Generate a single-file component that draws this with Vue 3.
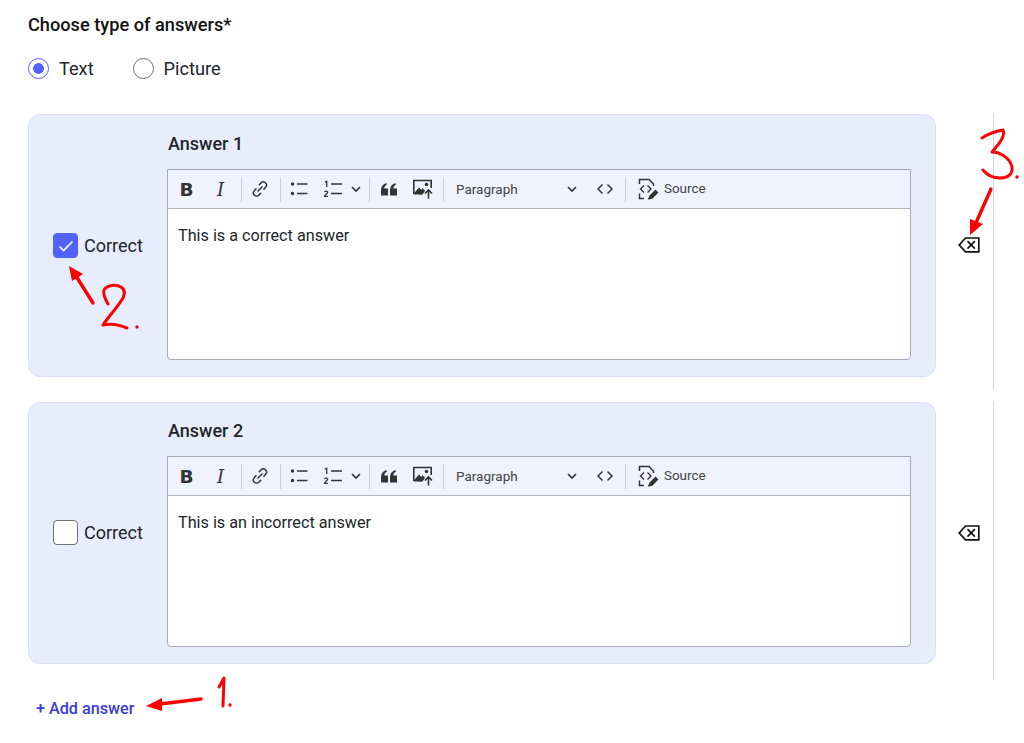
<script setup>
const answers = [
  { id: 1, text: 'This is a correct answer', correct: true },
  { id: 2, text: 'This is an incorrect answer', correct: false },
]
</script>

<template>
  <div class="page">
    <h2 class="title">Choose type of answers*</h2>
    <div class="radios">
      <label class="radio"><span class="dot on"></span>Text</label>
      <label class="radio"><span class="dot"></span>Picture</label>
    </div>

    <div class="list">
      <div v-for="a in answers" :key="a.id" class="row">
        <div class="card">
          <div class="check">
            <span class="box" :class="{ on: a.correct }">
              <svg v-if="a.correct" width="16" height="16" viewBox="0 0 16 16"><path d="M1.500 8.500 5.500 12.500 14.500 3.500" fill="none" stroke="#fff" stroke-width="1.600"/></svg>
            </span>
            <span>Correct</span>
          </div>
          <div class="field">
            <div class="label">Answer {{ a.id }}</div>
            <div class="editor">
              <div class="toolbar">
                <span class="b">B</span>
                <span class="i">I</span>
                <span class="sep s1"></span>
                <span class="slot w36"><svg width="20" height="20" viewBox="0 0 20 20"><path d="M8 12 12 8M9.300 5.700l1.600-1.800a3.200 3.200 0 0 1 4.700 4.400l-1.700 1.900M10.700 14.200 9 16.100a3.200 3.200 0 0 1-4.700-4.400l1.700-1.900" fill="none" stroke="#333" stroke-width="1.500" stroke-linecap="round"/></svg></span>
                <span class="sep s2"></span>
                <span class="slot w36"><svg width="20" height="20" viewBox="0 0 20 20"><circle cx="3.500" cy="5" r="1.700" fill="#333"/><circle cx="3.500" cy="14.500" r="1.700" fill="#333"/><path d="M8 5h10.500M8 14.500h10.500" stroke="#333" stroke-width="1.500"/></svg></span>
                <span class="slot w32"><svg width="20" height="20" viewBox="0 0 20 20"><path d="M8 5h11M8 14.500h11" stroke="#333" stroke-width="1.500"/><path d="M1.800 3.200 3.700 2.400V8" fill="none" stroke="#333" stroke-width="1.300"/><path d="M1.500 13.200c.3-1.600 3.200-1.500 3.200.1 0 1.300-3 2.200-3.100 4h3.300" fill="none" stroke="#333" stroke-width="1.300"/></svg></span>
                <span class="slot w14"><svg width="10" height="10" viewBox="0 0 10 10"><path d="M1 3 5 7 9 3" fill="none" stroke="#333" stroke-width="1.600"/></svg></span>
                <span class="sep s3"></span>
                <span class="slot w38"><svg width="16" height="13" viewBox="0 0 16 13"><path d="M0 12.500V7.500C0 3.800 1.800 1.200 5.200 0l.8 1.500C4.300 2.500 3.400 3.800 3.300 5.600H7v6.900zM9 12.500V7.500C9 3.800 10.800 1.200 14.200 0l.8 1.500c-1.700 1-2.600 2.300-2.700 4.100H16v6.900z" fill="#333"/></svg></span>
                <span class="slot w30"><svg width="22" height="20" viewBox="0 0 22 20"><path d="M1.800 15V1.500h17.400V9" fill="none" stroke="#333" stroke-width="1.600"/><path d="M1.800 15.500v-1l5.200-6 3.500 3.500-1.500 3.500z" fill="#333"/><path d="M7 15.500l3.500-6.500 2.500 3-2.500 3.500z" fill="#333"/><circle cx="14.500" cy="5.500" r="1.800" fill="#333"/><path d="M16.500 19.500v-8M13 14.500l3.500-3.500 3.500 3.500" fill="none" stroke="#333" stroke-width="1.600"/></svg></span>
                <span class="sep s4"></span>
                <span class="para">Paragraph</span>
                <span class="slot w14"><svg width="10" height="10" viewBox="0 0 10 10"><path d="M1 3 5 7 9 3" fill="none" stroke="#333" stroke-width="1.600"/></svg></span>
                <svg class="code" width="16" height="12" viewBox="0 0 16 12"><path d="M5.500 1.500 1 6l4.500 4.500M10.500 1.500 15 6l-4.500 4.500" fill="none" stroke="#333" stroke-width="1.500"/></svg>
                <span class="sep s5"></span>
                <svg class="srcic" width="21" height="22" viewBox="0 0 21 22"><path d="M1.500 6V1.500h9.500l4.500 4.500v2M1.500 15.500v5h4.500M10 20.500h1" fill="none" stroke="#333" stroke-width="1.500"/><path d="M6 7.500 2.500 11 6 14.500M9.500 7.500 13 11 9.500 14.500" fill="none" stroke="#333" stroke-width="1.400"/><path d="M10.500 21.500l.8-3.800 6.200-6.200 3 3-6.200 6.200z" fill="#333"/></svg>
                <span class="src-label">Source</span>
              </div>
              <div class="content">{{ a.text }}</div>
            </div>
          </div>
        </div>
        <div class="side">
          <svg width="22" height="16" viewBox="0 0 22 16"><path d="M20.800 1H7.500L1.200 8l6.300 6.800h13.300z" fill="none" stroke="#111" stroke-width="1.700"/><path d="M9.500 4.200l7.400 7.500M16.900 4.200l-7.400 7.500" stroke="#111" stroke-width="1.700"/></svg>
        </div>
      </div>
    </div>

    <a class="add">+ Add answer</a>

    <svg class="marks" width="1024" height="743" viewBox="0 0 1024 743">
      <g fill="none" stroke="#f00" stroke-width="3" stroke-linecap="round" stroke-linejoin="round">
        <path d="M201 699 160 704" stroke-width="3.400"/>
        <path d="M219 687 224 678 223 706"/>
        <path d="M93 303 76 276" stroke-width="3.400"/>
        <path d="M108 304c-3-5-5-10-4-14 3-5 12-6 17-3 5 3 4 9 0 14-5 8-12 15-18 24 9-2 17 0 24 3"/>
        <path d="M982 138c6-4 15-7 21-8 3 6-5 15-11 22 8 0 18 6 20 15 1 8-5 11-12 11-8 0-13-3-17-8"/>
        <path d="M991 189 975 225" stroke-width="3.400"/>
      </g>
      <g fill="#f00">
        <path d="M146 706 162 698 162 711z"/>
        <path d="M69 266 83 274 72 281z"/>
        <path d="M970 235 970 219 983 224z"/>
        <circle cx="230" cy="705" r="1.700"/>
        <circle cx="137" cy="327" r="1.700"/>
        <circle cx="1017" cy="177" r="1.700"/>
      </g>
    </svg>
  </div>
</template>

<style scoped>
.page {
  position: relative;
  width: 1024px;
  height: 743px;
  overflow: hidden;
  box-sizing: border-box;
  padding: 14px 0 0 28px;
  background: #fff;
  font-family: Roboto, "Liberation Sans", sans-serif;
  color: #212529;
}
.title {
  margin: 0;
  font-size: 18.200px;
  line-height: 22px;
  font-weight: 500;
  color: #111;
}
.radios {
  display: flex;
  gap: 39px;
  margin-top: 20px;
}
.radio {
  display: flex;
  align-items: center;
  gap: 10px;
  font-size: 18.200px;
  line-height: 24px;
  padding-top: 1px;
  margin-bottom: -1px;
}
.dot {
  box-sizing: border-box;
  width: 21px;
  height: 21px;
  margin-top: -1px;
  border-radius: 50%;
  border: 1.500px solid #707070;
  background: #fff;
}
.dot.on {
  border-color: #5361ff;
  background: radial-gradient(circle, #5361ff 0 5px, #fff 5.700px);
}
.list {
  display: flex;
  flex-direction: column;
  gap: 11px;
  margin-top: 33px;
}
.row {
  display: flex;
  width: 966px;
  height: 277px;
}
.row + .row {
  height: 279px;
}
.card {
  box-sizing: border-box;
  width: 908px;
  height: 263px;
  margin-top: 1px;
  display: flex;
  align-items: stretch;
  background: #e8edfe;
  border: 1px solid #d9e1fb;
  border-radius: 12px;
}
.row + .row .card {
  height: 262px;
}
.check {
  box-sizing: border-box;
  width: 138px;
  padding-left: 24px;
  display: flex;
  align-items: center;
  gap: 6px;
  font-size: 18px;
}
.row + .row .check {
  padding-bottom: 1px;
}
.box {
  box-sizing: border-box;
  width: 25px;
  height: 25px;
  border-radius: 4px;
  border: 1px solid #707070;
  background: #fff;
  display: flex;
  align-items: center;
  justify-content: center;
}
.box.on {
  background: #5361ff;
  border-color: #5361ff;
}
.field {
  width: 744px;
}
.label {
  margin-top: 17px;
  margin-bottom: 13px;
  height: 24px;
  line-height: 24px;
  font-size: 18px;
  font-weight: 500;
  padding-left: 1px;
}
.row + .row .label {
  margin-top: 16px;
  margin-bottom: 13px;
}
.editor {
  box-sizing: border-box;
  height: 191px;
  border: 1px solid #a9a9b4;
  border-radius: 0 0 4px 4px;
  background: #fff;
  display: flex;
  flex-direction: column;
}
.toolbar {
  box-sizing: border-box;
  height: 39px;
  flex: none;
  display: flex;
  align-items: center;
  background: #f0f3ff;
  border-bottom: 1px solid #b4b4bd;
  color: #333;
}
.slot {
  flex: none;
  display: flex;
  align-items: center;
  justify-content: center;
}
.w36 { width: 36px; }
.w32 { width: 32px; }
.w14 { width: 14px; }
.w38 { width: 38px; }
.w30 { width: 30px; }
.b {
  flex: none;
  width: 37px;
  text-align: center;
  font-family: "DejaVu Sans", sans-serif;
  font-weight: 700;
  font-size: 18.500px;
}
.i {
  flex: none;
  width: 31px;
  text-align: center;
  font-family: "DejaVu Serif", serif;
  font-style: italic;
  font-size: 18px;
}
.sep {
  flex: none;
  width: 1px;
  height: 25px;
  background: #cfcfd6;
}
.s1 { margin-left: 5px; }
.s2 { margin-left: 2px; }
.s3 { margin-left: 6px; }
.s4 { margin-left: 5px; }
.s5 { margin-left: 12px; }
.para {
  flex: none;
  box-sizing: border-box;
  width: 121px;
  padding-left: 12px;
  padding-bottom: 1px;
  font-size: 13.500px;
  color: #444;
}
.code {
  flex: none;
  margin-left: 18px;
}
.srcic {
  flex: none;
  margin-left: 12px;
}
.src-label {
  margin-left: 5px;
  padding-bottom: 1px;
  font-size: 13.400px;
  color: #444;
}
.content {
  padding: 17px 10px;
  font-size: 16.200px;
  line-height: 20px;
  color: #212529;
}
.side {
  width: 58px;
  height: 100%;
  box-sizing: border-box;
  border-right: 1px solid #d8d8d8;
  padding-left: 22px;
  padding-top: 124px;
}
.add {
  display: block;
  margin-top: 19px;
  margin-left: 8px;
  font-size: 16.200px;
  line-height: 20px;
  font-weight: 500;
  color: #3a3ae0;
}
.marks {
  position: absolute;
  left: 0;
  top: 0;
  pointer-events: none;
}
</style>
